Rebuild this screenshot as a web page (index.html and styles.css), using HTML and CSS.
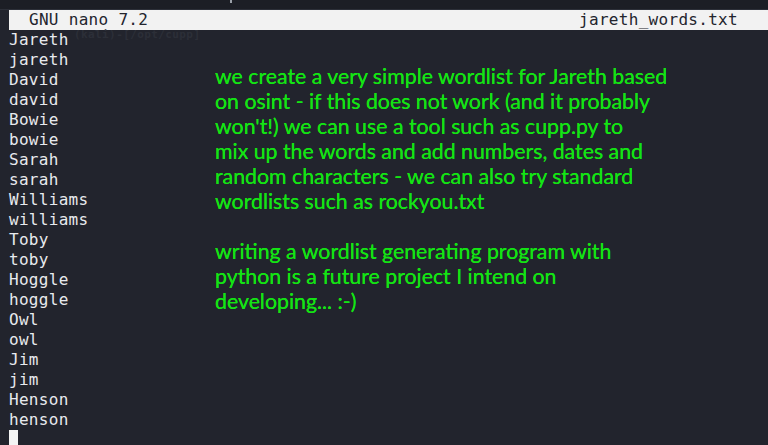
FILE: index.html
```html
<!DOCTYPE html>
<html>
<head>
<meta charset="utf-8">
<link rel="stylesheet" href="styles.css">
</head>
<body>
<div class="screen">
  <div class="topstrip"><span class="tick"></span></div>
  <div class="titlebar">
    <span class="app">GNU nano 7.2</span>
    <span class="file">jareth_words.txt</span>
  </div>
  <div class="editor">
    <div class="ghost">(kali)-[/opt/cupp]</div>
    <pre class="lines">Jareth
jareth
David
david
Bowie
bowie
Sarah
sarah
Williams
williams
Toby
toby
Hoggle
hoggle
Owl
owl
Jim
jim
Henson
henson
<span class="cursor"> </span></pre>
    <div class="note">
      <p>we create a very simple wordlist for Jareth based<br>on osint - if this does not work (and it probably<br>won't!) we can use a tool such as cupp.py to<br>mix up the words and add numbers, dates and<br>random characters - we can also try standard<br>wordlists such as rockyou.txt</p>
      <p>writing a wordlist generating program with<br>python is a future project I intend on<br>developing... :-)</p>
    </div>
  </div>
</div>
</body>
</html>
```
FILE: styles.css
```css
html, body {
  margin: 0;
  padding: 0;
  background: #22242d;
  overflow: hidden;
}
.screen {
  width: 768px;
  height: 445px;
  display: flex;
  flex-direction: column;
  background: #22242d;
  font-family: "DejaVu Sans Mono", monospace;
  font-size: 16px;
  letter-spacing: 0.3px;
  overflow: hidden;
}
.topstrip {
  flex-shrink: 0;
  height: 9px;
  background: #1c1e25;
  border-bottom: 1px solid #2c2f38;
  position: relative;
}
.tick {
  position: absolute;
  left: 230px;
  top: 0;
  width: 2px;
  height: 3px;
  background: #9aa0a8;
}
.titlebar {
  flex-shrink: 0;
  margin-left: 9px;
  height: 20px;
  line-height: 20px;
  background: #f2f2f2;
  color: #23252e;
  display: flex;
  justify-content: space-between;
  padding: 0 30px 0 20px;
}
.editor {
  position: relative;
  display: flex;
  flex: 1 0 auto;
}
.ghost {
  position: absolute;
  left: 74px;
  top: 0;
  font-size: 11px;
  line-height: 10px;
  color: #2c2f38;
  font-weight: bold;
  letter-spacing: 0.4px;
}
.lines {
  margin: 0 0 0 9px;
  width: 197px;
  font: inherit;
  line-height: 20px;
  color: #e8eaee;
  position: relative;
}
.cursor {
  display: inline-block;
  width: 9px;
  height: 17px;
  background: #f4f4f4;
  vertical-align: top;
}
.note {
  padding-top: 34px;
  padding-left: 9px;
  font-family: "Lato", "Open Sans", sans-serif;
  font-size: 21.3px;
  line-height: 25px;
  letter-spacing: 0;
  color: #14e414;
  text-shadow: 0 0 0.4px #14e414;
}
.note p {
  margin: 0 0 25px 0;
}
```
